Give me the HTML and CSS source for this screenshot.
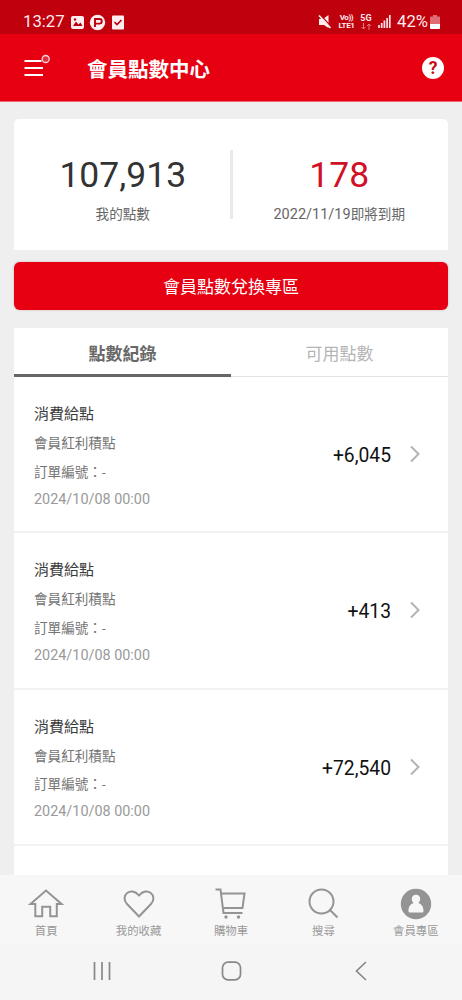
FILE: index.html
```html
<!DOCTYPE html>
<html lang="zh-Hant">
<head>
<meta charset="utf-8">
<title>會員點數中心</title>
<link rel="stylesheet" href="styles.css">
</head>
<body>
<div class="screen">
  <div class="status">
    <span class="clock">13:27</span>
    <svg class="s-left" width="56" height="18" viewBox="0 0 56 18">
      <rect x="1" y="3" width="13" height="13" rx="2" fill="#ffeef0"/>
      <path d="M3 13 6 8.5l2.5 3 2-2L12.500 13z" fill="#b8000f"/><circle cx="5" cy="6.500" r="1.200" fill="#b8000f"/>
      <circle cx="27.500" cy="9.500" r="7.700" fill="#ffeef0"/>
      <path d="M25 14V6h4.500c3 0 3 4.600 0 4.600H25" fill="none" stroke="#b8000f" stroke-width="1.900"/>
      <rect x="42" y="2.500" width="12" height="14" rx="1" fill="#ffeef0"/>
      <path d="m44.500 9 2.500 2.500 4.500-4.500" fill="none" stroke="#b8000f" stroke-width="1.700"/>
    </svg>
    <span class="grow"></span>
    <svg class="mute" width="14" height="16" viewBox="0 0 14 16"><path d="M1 5h4l5.500-4v13L6 11H1z" fill="#ffeef0"/><path d="m2 .5 11 12" stroke="#c2000f" stroke-width="1.300"/><path d="m1 1.500 11.500 12.500" stroke="#ffeef0" stroke-width="1.700"/></svg>
    <span class="net lte"><b>Vo))</b><b>LTE1</b></span>
    <span class="net five"><b>5G</b><svg width="11" height="7" viewBox="0 0 11 7"><path d="M2.500 0v6M.5 4l2 2 2-2M8 7V1M6 3l2-2 2 2" fill="none" stroke="#ee7b83"/></svg></span>
    <svg class="signal" width="13" height="13" viewBox="0 0 13 13"><path d="M1 13v-3M3.700 13V8M6.400 13V5.500M9.100 13V3M11.800 13V0" stroke="#ffe3e6" stroke-width="1.700"/></svg>
    <span class="percent">42%</span>
    <svg class="battery" width="10" height="14" viewBox="0 0 10 14"><path d="M3 0h4v1.500h2c.6 0 1 .4 1 1V9H0V2.500c0-.6.4-1 1-1h2z" fill="#df6c74"/><path d="M0 9h10v4c0 .6-.4 1-1 1H1c-.6 0-1-.4-1-1z" fill="#fff"/></svg>
  </div>
  <header class="header">
    <svg class="menu" width="28" height="24" viewBox="0 0 28 24"><path d="M.5 7h17M.5 14H19M.5 21H19" stroke="#fff" stroke-width="1.900"/><circle cx="21.700" cy="5" r="3.500" fill="#dc3241" stroke="#ffd5d8" stroke-width="1.300"/></svg>
    <h1>會員點數中心</h1>
    <span class="help">?</span>
  </header>
  <main class="main">
    <section class="summary">
      <div class="stat"><strong>107,913</strong><span>我的點數</span></div>
      <i></i>
      <div class="stat expiring"><strong>178</strong><span><time>2022/11/19</time>即將到期</span></div>
    </section>
    <button class="exchange">會員點數兌換專區</button>
    <section class="records">
      <nav class="tabs"><span class="active">點數紀錄</span><span>可用點數</span></nav>
      <article><div class="info"><h2>消費給點</h2><p>會員紅利積點</p><p>訂單編號：-</p><time>2024/10/08 00:00</time></div><b>+6,045</b><svg class="chevron" width="10" height="18" viewBox="0 0 10 18"><path d="m1 1.500 7.500 7.500L1 16.500" /></svg></article>
      <article><div class="info"><h2>消費給點</h2><p>會員紅利積點</p><p>訂單編號：-</p><time>2024/10/08 00:00</time></div><b>+413</b><svg class="chevron" width="10" height="18" viewBox="0 0 10 18"><path d="m1 1.500 7.500 7.500L1 16.500" /></svg></article>
      <article><div class="info"><h2>消費給點</h2><p>會員紅利積點</p><p>訂單編號：-</p><time>2024/10/08 00:00</time></div><b>+72,540</b><svg class="chevron" width="10" height="18" viewBox="0 0 10 18"><path d="m1 1.500 7.500 7.500L1 16.500" /></svg></article>
    </section>
  </main>
  <nav class="bottom">
    <a><svg viewBox="0 0 36 34"><path d="M2.500 17 18 3.500 33.500 17h-4.700v12.200h-6.600v-9.400h-8v9.400H7.300V17z"/></svg><span>首頁</span></a>
    <a><svg viewBox="0 0 36 34"><path d="M18 29.500 6 17C-1.500 9 10-1.500 18 8.500 26-1.500 37.500 9 30 17z"/></svg><span>我的收藏</span></a>
    <a><svg viewBox="0 0 36 34"><path d="M2.500 2.500h5L10.500 26h19M8 6.500h23.500L29.500 21H10"/><circle class="solid" cx="13" cy="30" r="1.700"/><circle class="solid" cx="25.500" cy="30" r="1.700"/></svg><span>購物車</span></a>
    <a><svg viewBox="0 0 36 34"><circle cx="16.500" cy="14.500" r="12"/><path d="m25 23 7.500 7.500"/></svg><span>搜尋</span></a>
    <a><svg viewBox="0 0 36 34"><circle class="solid" cx="18" cy="17" r="15.200"/><path class="person" d="M18 7.800c-5 0-5.200 6-2.300 8.300-3.700 1-5.200 4.400-5.200 7.800 0 1.100.6 1.600 1.500 1.600h12c.9 0 1.500-.5 1.500-1.600 0-3.400-1.500-6.800-5.200-7.800 2.900-2.300 2.700-8.300-2.300-8.300z"/></svg><span>會員專區</span></a>
  </nav>
  <div class="system">
    <svg viewBox="0 0 24 24"><path d="M3.500 3v18M11 3v18M18.500 3v18"/></svg>
    <svg viewBox="0 0 24 24"><rect x="2.500" y="3.200" width="18" height="17.600" rx="5.500"/></svg>
    <svg viewBox="0 0 24 24"><path d="m17 3-9.500 9 9.500 9"/></svg>
  </div>
</div>
</body>
</html>
```
FILE: styles.css
```css
* { box-sizing: border-box; }
body { margin: 0; font-family: Roboto, "Noto Sans CJK TC", sans-serif; }
h1, h2, p { margin: 0; }
svg { flex: none; display: block; }
.screen { width: 462px; height: 1000px; display: flex; flex-direction: column; overflow: hidden; background: #efefef; }
.status { height: 34px; flex: none; background: #bf000d; color: #ffebed; display: flex; align-items: center; padding: 9px 22px 0 23px; }
.clock { width: 47px; font-size: 16.700px; line-height: 24px; }
.grow { flex: 1; }
.net { display: flex; flex-direction: column; font-size: 8px; line-height: 8px; align-items: center; }
.net b { font-weight: 700; }
.lte { width: 17px; margin-left: 6px; letter-spacing: -0.4px; }
.five { width: 12px; margin-left: 5px; }
.five b { font-size: 9px; }
.five svg { margin-top: 1px; }
.mute { margin-top: 1px; }
.signal { margin-left: 6px; }
.percent { margin-left: 6px; width: 31px; font-size: 16.700px; line-height: 24px; }
.battery { margin-left: 2px; }
.header { height: 68px; flex: none; background: #e60012; display: flex; align-items: center; padding: 0 18px 0 24px; border-bottom: 1px solid #ed6670; }
.menu { margin-top: -3px; }
h1 { margin: 5px 0 0 35px; font-size: 20.500px; line-height: 30px; color: #fff; font-weight: 700; flex: 1; }
.help { width: 22px; height: 22px; margin-top: 1px; border-radius: 50%; background: #fff; color: #cc0712; font-size: 17.500px; line-height: 22px; font-weight: 700; text-align: center; }
.main { height: 773px; flex: none; padding: 17px 14px 0; overflow: hidden; }
.summary { height: 131px; background: #fff; border-radius: 5px 5px 0 0; display: flex; }
.summary i { width: 3px; height: 69px; background: #e9e9e9; margin-top: 31px; }
.stat { flex: 1; display: flex; flex-direction: column; align-items: center; padding: 33px 0 0 2px; color: #333; }
.stat strong { font-weight: 400; font-size: 35.500px; line-height: 46px; }
.stat span { font-size: 13.600px; line-height: 20px; margin-top: 6px; color: #666; }
.stat time { font-size: 14.500px; line-height: 20px; }
.expiring { padding-left: 0; padding-right: 2px; }
.expiring strong { color: #cf1025; }
.exchange { display: block; width: 100%; height: 48px; margin: 12px 0 18px; padding: 3px 0 0; border: 0; border-radius: 6px; background: #e60012; color: #fff; font: 17px/45px Roboto, "Noto Sans CJK TC", sans-serif; box-shadow: 0 0 2px #c9a5a8; }
.records { background: #fff; height: 600px; }
.tabs { height: 49px; display: flex; border-bottom: 1px solid #e4e4e4; }
.tabs span { flex: 1; height: 49px; text-align: center; font-size: 17px; line-height: 52px; color: #b5b5b5; }
.tabs .active { color: #686868; font-weight: 700; border-bottom: 3px solid #666; }
article { height: 156.400px; padding: 25px 28px 0 20px; display: flex; border-bottom: 2px solid #f2f2f2; }
.info { flex: 1; font-size: 13.600px; color: #747474; }
h2 { font-size: 15px; line-height: 24px; color: #3b3b3b; font-weight: 400; }
.info p { line-height: 22px; margin-top: 6px; }
.info p + p { margin-top: 6.500px; }
.info time { display: block; color: #999; font-size: 14.400px; line-height: 20px; margin-top: 7px; }
article b { font-size: 19.300px; line-height: 24px; margin-top: 42px; font-weight: 400; color: #111; }
.chevron { margin: 43px 0 0 19px; fill: none; stroke: #b3b3b3; stroke-width: 2; }
.bottom { height: 69px; flex: none; background: #f7f7f7; display: flex; justify-content: space-between; }
.bottom a { flex: 1; display: flex; flex-direction: column; align-items: center; padding-top: 12px; color: #999; }
.bottom svg { width: 36px; height: 34px; fill: none; stroke: #949494; stroke-width: 2; }
.bottom span { font-size: 11.400px; line-height: 18px; margin-top: 1px; }
.bottom .solid { fill: #949494; stroke: none; }
.bottom .person { fill: #f7f7f7; stroke: none; }
.system { height: 56px; flex: none; background: #f5f5f5; display: flex; justify-content: space-between; padding: 15px 89px 0 91px; }
.system svg { width: 24px; height: 24px; fill: none; stroke: #888; stroke-width: 1.700; }
```
